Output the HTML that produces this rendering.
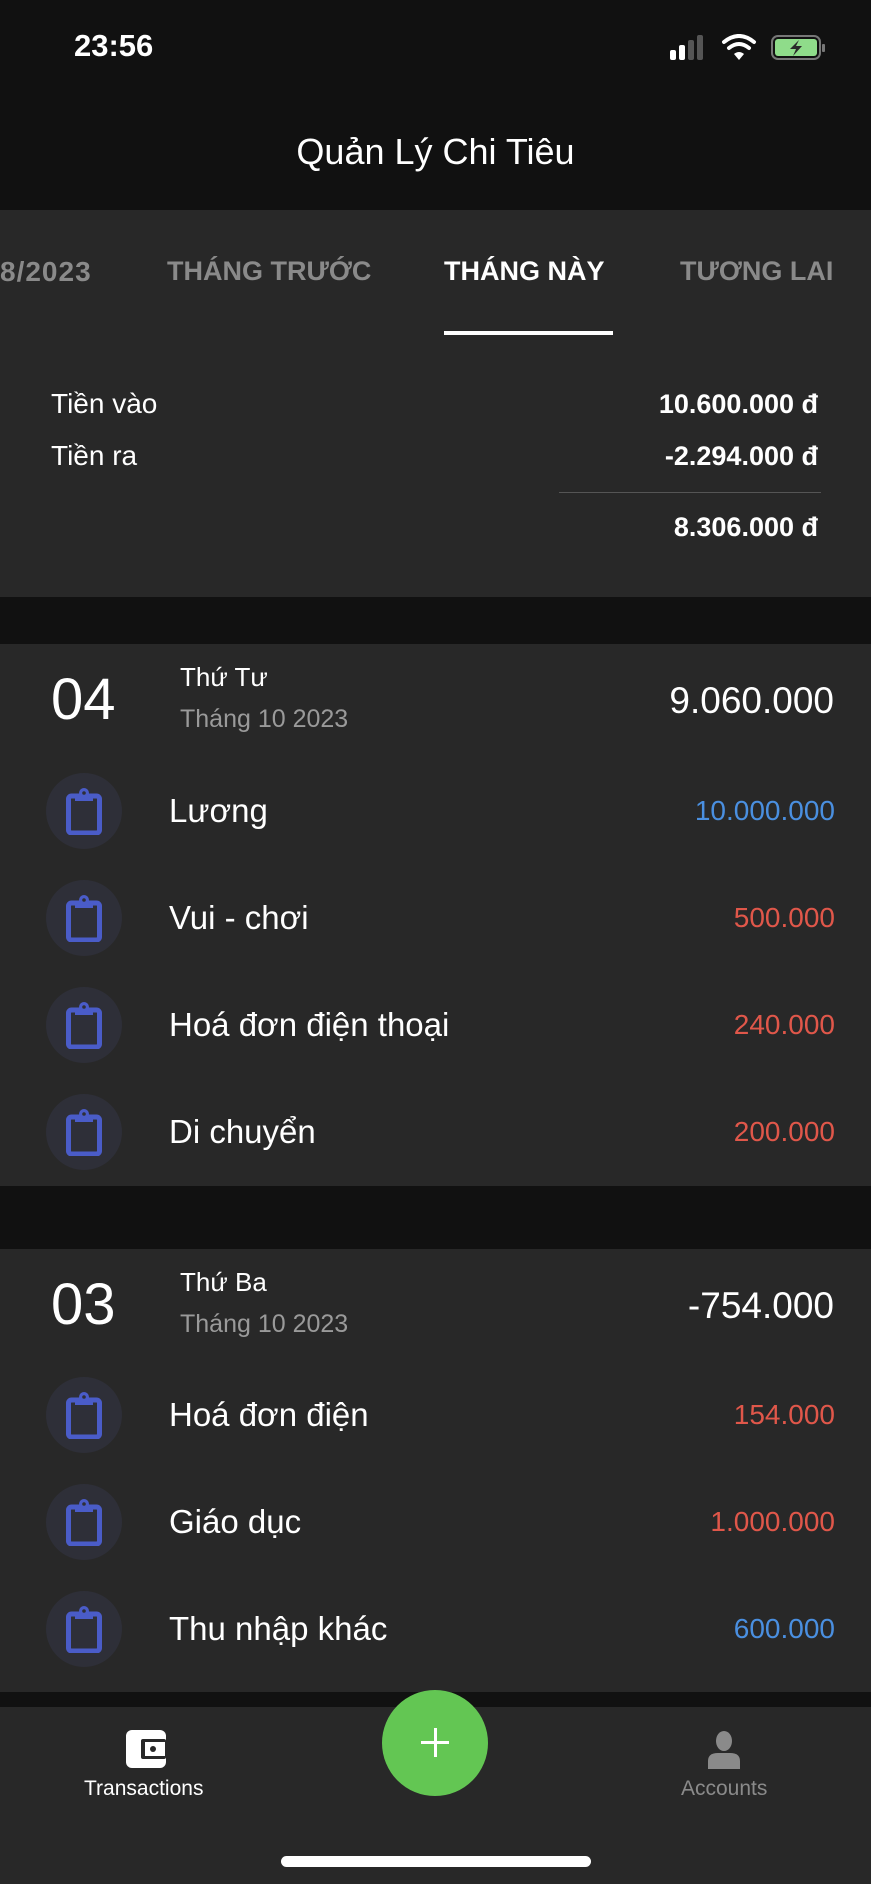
<!DOCTYPE html>
<html><head><meta charset="utf-8"><style>
*{margin:0;padding:0;box-sizing:border-box}
body{width:871px;height:1884px;background:#111;font-family:"Liberation Sans",sans-serif;color:#fff;position:relative;overflow:hidden}
.a{position:absolute;white-space:nowrap}
.card{position:absolute;left:0;width:871px;background:#282828}
.ic{position:absolute;left:46px;width:76px;height:76px;border-radius:50%;background:#2e2f38}
.ic svg{position:absolute;left:20px;top:14px}
.lbl{position:absolute;left:169px;font-size:33px;transform:translateY(-50%)}
.amt{position:absolute;right:36px;font-size:28px;transform:translateY(-50%)}
.r{color:#e0574a}.b{color:#4a8fe0}
</style></head><body>
<div class="a" style="left:74px;top:28px;font-size:31px;font-weight:bold">23:56</div>
<svg class="a" style="left:668px;top:34px" width="160" height="30" viewBox="0 0 160 30">
<rect x="2" y="16" width="6" height="10" rx="2" fill="#fff"/><rect x="11" y="11" width="6" height="15" rx="2" fill="#fff"/><rect x="20" y="6" width="6" height="20" rx="2" fill="#555"/><rect x="29" y="1" width="6" height="25" rx="2" fill="#555"/>
<path d="M56 8 Q71 -4 86 8" stroke="#fff" stroke-width="4" fill="none" stroke-linecap="round"/><path d="M61 14 Q71 6 81 14" stroke="#fff" stroke-width="4" fill="none" stroke-linecap="round"/><path d="M66 20 L71 26 L76 20 Q71 16 66 20Z" fill="#fff"/>
<rect x="104" y="2" width="48" height="23" rx="6" fill="none" stroke="#777" stroke-width="2"/><rect x="107" y="5" width="42" height="17" rx="3" fill="#8fdc8a"/><rect x="154" y="10" width="3" height="8" rx="1" fill="#777"/>
<path d="M131 6 L122 15 L128 15 L125 22 L134 12 L128 12Z" fill="#2a2a2a"/></svg>
<div class="a" style="left:0;width:871px;text-align:center;top:131px;font-size:36px">Quản Lý Chi Tiêu</div>
<div class="a" style="left:0;top:210px;width:871px;height:387px;background:#282828"></div>
<div class="a" style="left:0;top:256px;font-size:28px;font-weight:bold;color:#8a8a8a;letter-spacing:1px">8/2023</div>
<div class="a" style="left:167px;top:256px;font-size:27px;font-weight:bold;color:#8a8a8a">THÁNG TRƯỚC</div>
<div class="a" style="left:444px;top:256px;font-size:27px;font-weight:bold;color:#fff">THÁNG NÀY</div>
<div class="a" style="left:680px;top:256px;font-size:27px;font-weight:bold;color:#8a8a8a">TƯƠNG LAI</div>
<div class="a" style="left:444px;top:331px;width:169px;height:4px;background:#fff"></div>
<div class="a" style="left:51px;top:388px;font-size:28px">Tiền vào</div>
<div class="a" style="left:51px;top:440px;font-size:28px">Tiền ra</div>
<div class="a" style="right:53px;top:389px;font-size:27px;font-weight:bold">10.600.000 đ</div>
<div class="a" style="right:53px;top:441px;font-size:27px;font-weight:bold">-2.294.000 đ</div>
<div class="a" style="left:559px;top:492px;width:262px;height:1px;background:#555"></div>
<div class="a" style="right:53px;top:512px;font-size:27px;font-weight:bold">8.306.000 đ</div>

<div class="card" style="top:644px;height:542px"></div>
<div class="card" style="top:1249px;height:443px"></div>
<div class="a" style="left:0;top:1707px;width:871px;height:177px;background:#282828"></div>

<div class="a" style="left:51px;top:666px;font-size:58px">04</div>
<div class="a" style="left:180px;top:662px;font-size:26px">Thứ Tư</div>
<div class="a" style="left:180px;top:705px;font-size:25px;color:#9a9a9a">Tháng 10 2023</div>
<div class="a" style="right:37px;top:680px;font-size:37px">9.060.000</div>

<div class="a" style="left:51px;top:1271px;font-size:58px">03</div>
<div class="a" style="left:180px;top:1267px;font-size:26px">Thứ Ba</div>
<div class="a" style="left:180px;top:1310px;font-size:25px;color:#9a9a9a">Tháng 10 2023</div>
<div class="a" style="right:37px;top:1285px;font-size:37px">-754.000</div>

<svg width="0" height="0" style="position:absolute"><defs><g id="cb"><rect x="2.5" y="9" width="31" height="37" rx="3" fill="none" stroke="#4a5cc8" stroke-width="5"/><path d="M9 7 H27 V14 H9Z" fill="#4a5cc8"/><circle cx="18" cy="6" r="5" fill="#4a5cc8"/><circle cx="18" cy="6" r="1.8" fill="#2e2f38"/></g></defs></svg>

<div class="ic" style="top:773px"><svg width="36" height="48"><use href="#cb"/></svg></div>
<div class="lbl" style="top:811px">Lương</div><div class="amt b" style="top:811px">10.000.000</div>
<div class="ic" style="top:880px"><svg width="36" height="48"><use href="#cb"/></svg></div>
<div class="lbl" style="top:918px">Vui - chơi</div><div class="amt r" style="top:918px">500.000</div>
<div class="ic" style="top:987px"><svg width="36" height="48"><use href="#cb"/></svg></div>
<div class="lbl" style="top:1025px">Hoá đơn điện thoại</div><div class="amt r" style="top:1025px">240.000</div>
<div class="ic" style="top:1094px"><svg width="36" height="48"><use href="#cb"/></svg></div>
<div class="lbl" style="top:1132px">Di chuyển</div><div class="amt r" style="top:1132px">200.000</div>

<div class="ic" style="top:1377px"><svg width="36" height="48"><use href="#cb"/></svg></div>
<div class="lbl" style="top:1415px">Hoá đơn điện</div><div class="amt r" style="top:1415px">154.000</div>
<div class="ic" style="top:1484px"><svg width="36" height="48"><use href="#cb"/></svg></div>
<div class="lbl" style="top:1522px">Giáo dục</div><div class="amt r" style="top:1522px">1.000.000</div>
<div class="ic" style="top:1591px"><svg width="36" height="48"><use href="#cb"/></svg></div>
<div class="lbl" style="top:1629px">Thu nhập khác</div><div class="amt b" style="top:1629px">600.000</div>

<svg class="a" style="left:125px;top:1729px" width="42" height="40" viewBox="0 0 42 40"><rect x="1" y="1" width="40" height="38" rx="6" fill="#fff"/><rect x="16" y="10" width="25" height="20" rx="2" fill="#282828"/><rect x="20" y="13" width="20" height="14" fill="#fff"/><circle cx="28" cy="20" r="3" fill="#282828"/></svg>
<div class="a" style="left:84px;top:1777px;font-size:21px">Transactions</div>
<div class="a" style="left:382px;top:1690px;width:106px;height:106px;border-radius:50%;background:#63c653"></div>
<div class="a" style="left:421px;top:1741px;width:28px;height:3px;background:#fff"></div>
<div class="a" style="left:433.5px;top:1728px;width:3px;height:29px;background:#fff"></div>
<svg class="a" style="left:706px;top:1731px" width="36" height="38" viewBox="0 0 36 38"><ellipse cx="18" cy="10" rx="8" ry="10" fill="#8a8a8a"/><path d="M2 38 V30 Q2 22 12 22 H24 Q34 22 34 30 V38Z" fill="#8a8a8a"/></svg>
<div class="a" style="left:681px;top:1777px;font-size:21px;color:#8a8a8a">Accounts</div>
<div class="a" style="left:281px;top:1856px;width:310px;height:11px;border-radius:6px;background:#fff"></div>
</body></html>
